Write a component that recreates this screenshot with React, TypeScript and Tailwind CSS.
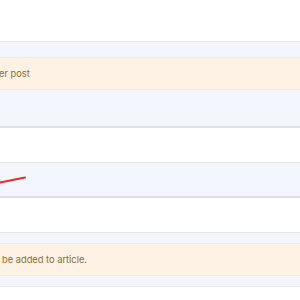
import React from "react"

const font = { fontFamily: "Inter, 'Noto Sans', sans-serif" }

const Notice = ({ text, offset }: { text: string; offset: string }) => (
  <div className="h-8 flex items-center bg-[#fef2e4] border-t border-[#f3e8dc] overflow-hidden">
    <span className={`text-[9.3px] text-[#8c6c34] whitespace-nowrap ${offset}`}>{text}</span>
  </div>
)

export default function App() {
  return (
    <div className="w-[300px] h-[300px] bg-white overflow-hidden" style={font}>
      <div className="h-[41px]" />
      <div className="border-t border-[#e4e8ee]">
        <div className="h-[15px] bg-[#f3f6fd]" />
        <Notice text="er post" offset="ml-[-1px]" />
        <div className="h-[37px] bg-[#f3f6fd] border-t border-[#e6e9ef]" />
      </div>
      <div className="border-t-2 border-[#dfe3e8] h-[36px]" />
      <div className="border-t border-[#e1e4e9] h-[34px] bg-[#f3f6fd] flex items-center">
        <svg width="30" height="10" viewBox="0 0 30 10" className="-mt-[2px]">
          <path d="M0 8.5 L25 3.5" stroke="#ec2a2a" strokeWidth="2" strokeLinecap="round" fill="none" />
        </svg>
      </div>
      <div className="border-t-2 border-[#dcdfe5] h-[36px]" />
      <div className="border-t border-[#e1e4e9]">
        <div className="h-[10px] bg-[#f3f6fd]" />
        <Notice text="be added to article." offset="ml-[2px]" />
        <div className="h-[11px] bg-[#f3f6fd] border-t border-[#e9ebf0]" />
      </div>
      <div className="border-t border-[#e9ebf0]" />
    </div>
  )
}
